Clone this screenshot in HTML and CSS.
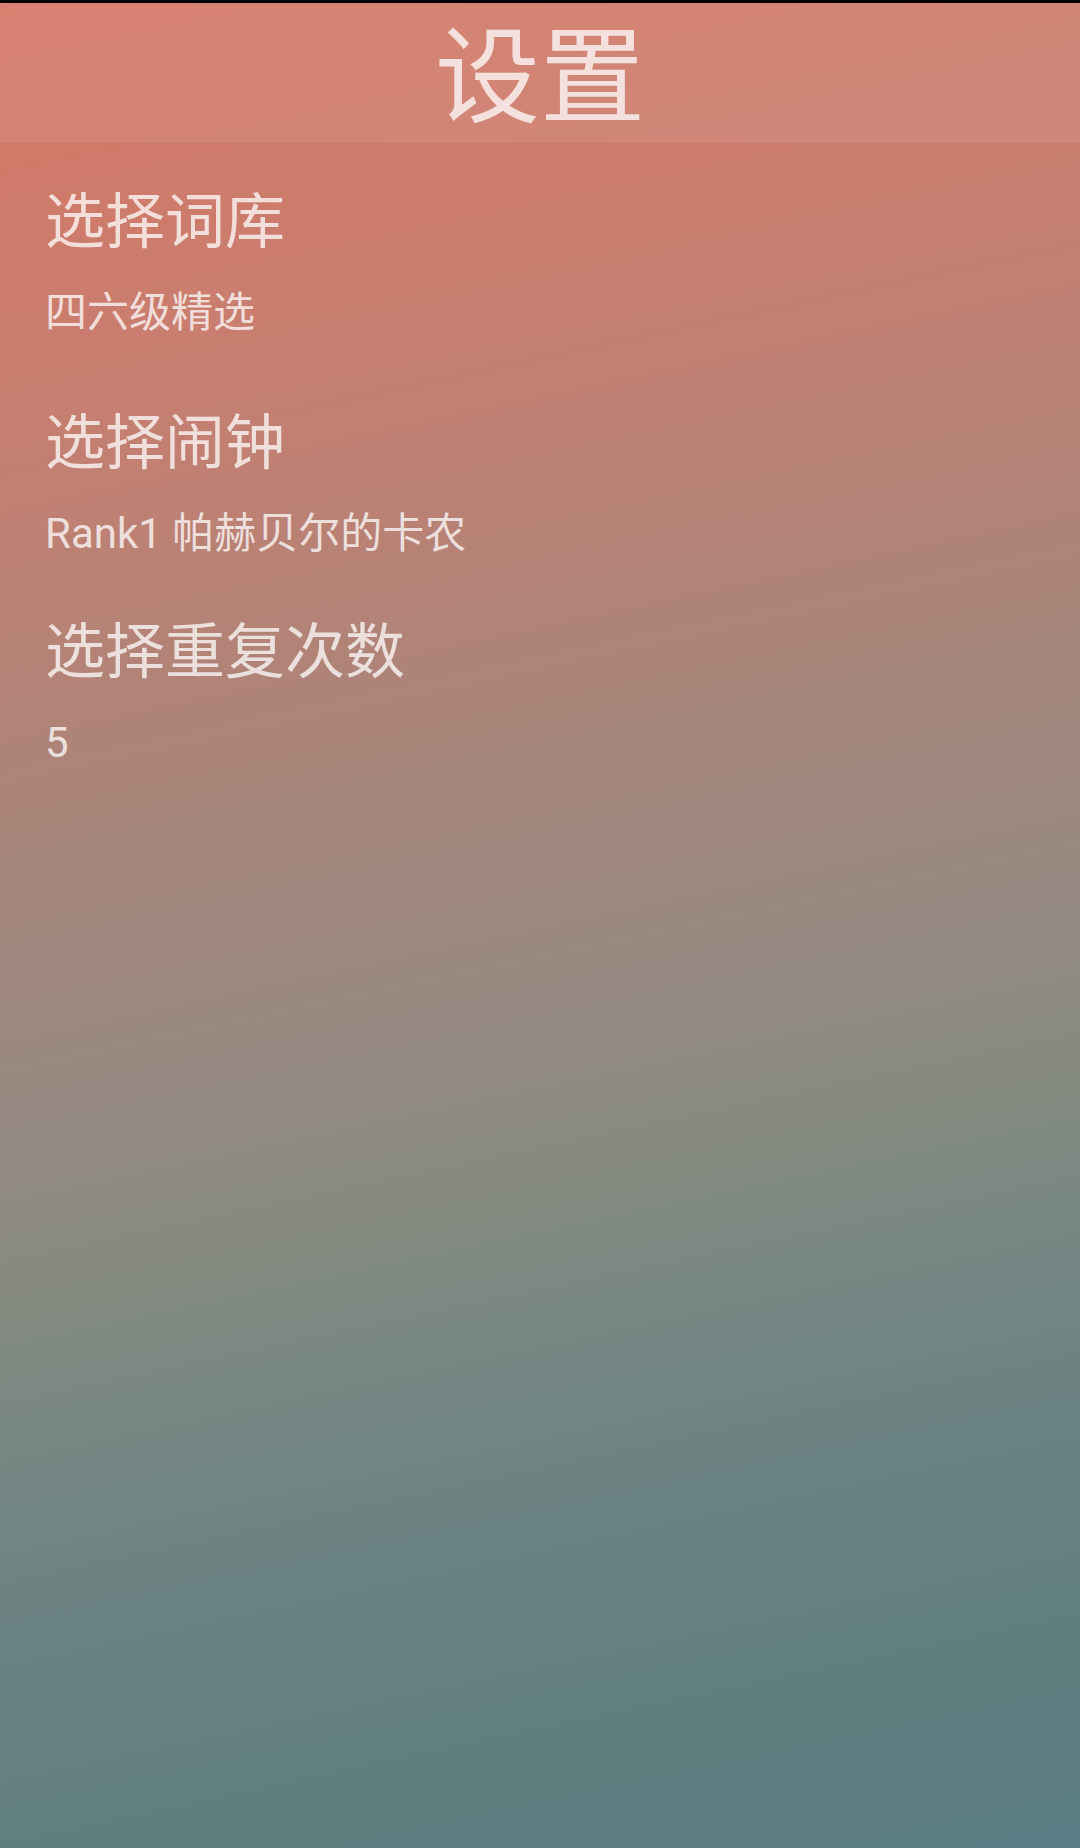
FILE: index.html
```html
<!DOCTYPE html>
<html lang="zh-CN">

<head>
    <meta charset="UTF-8">
    <meta name="viewport" content="width=device-width, initial-scale=1.0">
    <title>设置</title>

    <link rel="stylesheet" href="styles.css">
</head>

<body>
    <div class="status"></div>
    <div class="screen">
        <h1 class="title">设置</h1>

        <ul class="options">
            <li class="option option-first">
                <div class="option-name">选择词库</div>
                <div class="option-value">四六级精选</div>
            </li>
            <li class="option">
                <div class="option-name">选择闹钟</div>
                <div class="option-value">Rank1 帕赫贝尔的卡农</div>
            </li>
            <li class="option">
                <div class="option-name">选择重复次数</div>
                <div class="option-value">5</div>
            </li>
        </ul>
    </div>
</body>

</html>
```

FILE: styles.css
```css
html,
body {
    height: 100%;
}

body {
    margin: 0;
    display: flex;
    flex-direction: column;
    font-family: Roboto, "Noto Sans CJK SC", sans-serif;
    color: rgba(255, 255, 255, 0.75);
    background: #000;
}

.status {
    height: 3px;
    background: #000;
}

.screen {
    flex-grow: 1;
    background: linear-gradient(168deg, #d57765 0%, #c97e6f 18%, #a6867b 42%, #968a82 54%, #848a80 63%, #718584 73%, #607e7e 89%, #5a7e86 100%);
}

.title {
    margin: 0;
    height: 140px;
    box-sizing: border-box;
    padding-top: 12px;
    line-height: 128px;
    text-align: center;
    font-size: 105px;
    font-weight: normal;
    background: rgba(255, 255, 255, 0.08);
}

.options {
    list-style-type: none;
    margin: 0;
    padding: 40px 45px 0;
    display: flex;
    flex-direction: column;
    gap: 49px;
}

.option {
    display: flex;
    flex-direction: column;
    gap: 20px;
}

.option-first {
    padding-bottom: 12px;
}

.option-name {
    font-size: 60px;
    line-height: 80px;
}

.option-value {
    font-size: 42px;
    line-height: 60px;
}
```
